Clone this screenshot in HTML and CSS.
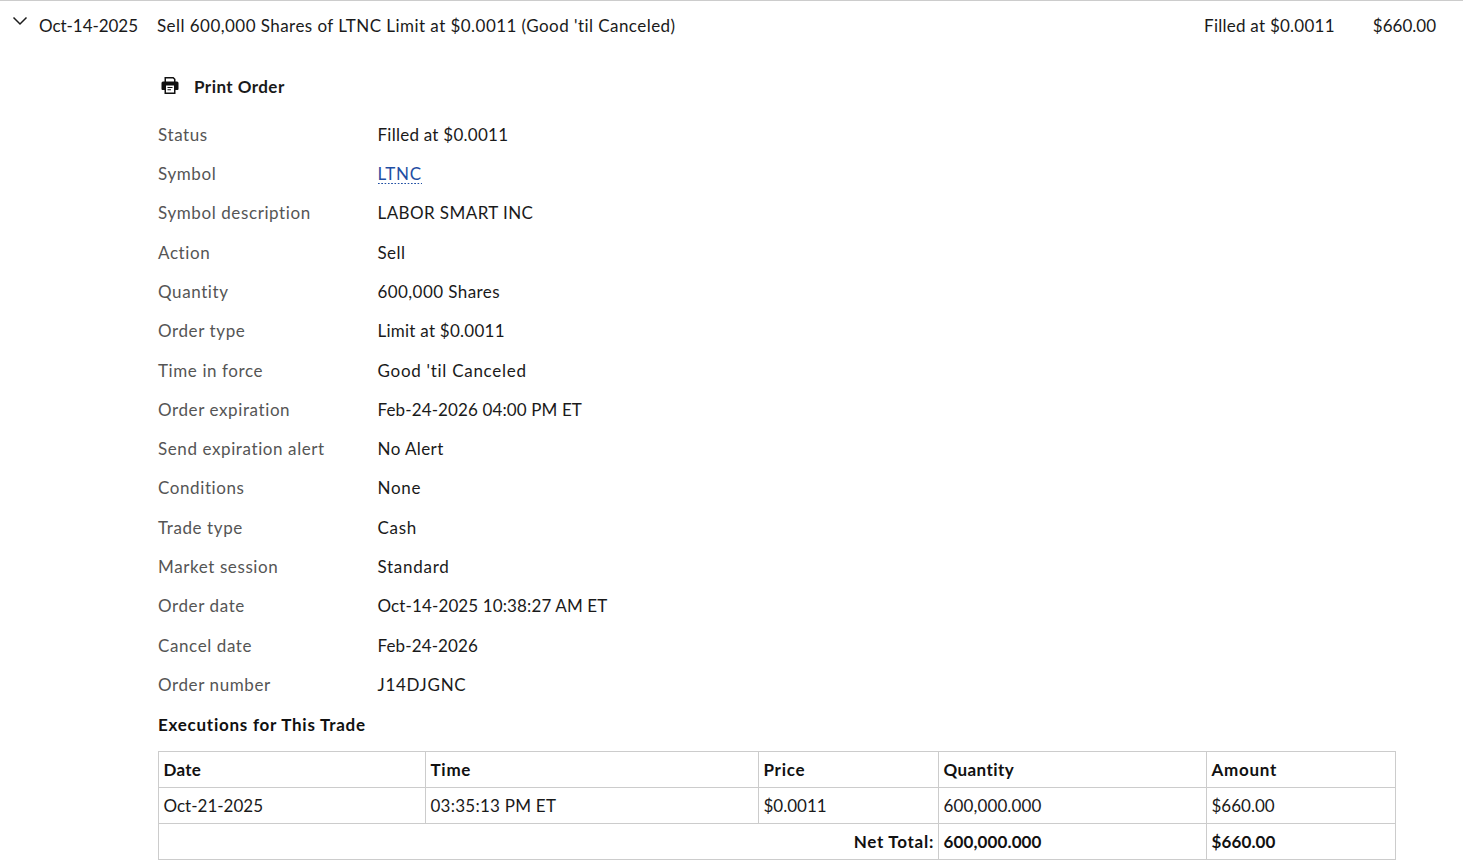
FILE: index.html
```html
<!DOCTYPE html>
<html lang="en">
<head>
<meta charset="utf-8">
<title>Order details</title>
<link rel="stylesheet" href="styles.css">
</head>
<body>
<div class="order">
  <div class="summary">
    <svg class="chevron" width="16" height="10" viewBox="0 0 16 10"><path d="M1.500 1.500 L8 8 L14.500 1.500" fill="none" stroke="#1c1c1c" stroke-width="1.500"/></svg>
    <span class="date">Oct-14-2025</span>
    <span class="desc">Sell 600,000 Shares of LTNC Limit at $0.0011 (Good 'til Canceled)</span>
    <span class="state sp-1">Filled at $0.0011</span>
    <span class="amount">$660.00</span>
  </div>
  <div class="detail">
    <div class="print">
      <svg class="print-icon" width="18" height="18" viewBox="0 0 18 18"><path fill="#111" fill-rule="evenodd" d="M3.500 0H12.500L14.500 2V4.500H16A1.500 1.500 0 0 1 17.500 6V12A1 1 0 0 1 16.500 13H14.500V17H3.500V13H1.500A1 1 0 0 1 .5 12V6A1.500 1.500 0 0 1 2 4.500H3.500ZM5 1.500V4.500H13V2.600L11.900 1.500ZM5 8.500V15.500H13V8.500Z"/><path fill="#111" d="M6.500 10H11.500V11H6.500ZM6.500 12.200H10V13.200H6.500Z"/></svg>
      <span>Print Order</span>
    </div>
    <dl class="fields">
      <dt>Status</dt><dd class="sp-1">Filled at $0.0011</dd>
      <dt>Symbol</dt><dd class="sp-3"><a class="symbol">LTNC</a></dd>
      <dt>Symbol description</dt><dd class="sp-2">LABOR SMART INC</dd>
      <dt>Action</dt><dd class="sp-2">Sell</dd>
      <dt>Quantity</dt><dd class="sp-2">600,000 Shares</dd>
      <dt>Order type</dt><dd class="sp-1">Limit at $0.0011</dd>
      <dt>Time in force</dt><dd class="sp-3">Good 'til Canceled</dd>
      <dt>Order expiration</dt><dd class="sp-0">Feb-24-2026 04:00 PM ET</dd>
      <dt>Send expiration alert</dt><dd class="sp-2">No Alert</dd>
      <dt>Conditions</dt><dd class="sp-3">None</dd>
      <dt>Trade type</dt><dd class="sp-3">Cash</dd>
      <dt>Market session</dt><dd class="sp-3">Standard</dd>
      <dt>Order date</dt><dd class="sp-0">Oct-14-2025 10:38:27 AM ET</dd>
      <dt>Cancel date</dt><dd class="sp-0">Feb-24-2026</dd>
      <dt>Order number</dt><dd class="sp-3">J14DJGNC</dd>
    </dl>
    <h3 class="exec-title">Executions for This Trade</h3>
    <table class="exec">
      <colgroup><col class="c1"><col class="c2"><col class="c3"><col class="c4"><col class="c5"></colgroup>
      <thead><tr><th class="sp-1">Date</th><th class="sp-3">Time</th><th class="sp-3">Price</th><th class="sp-2">Quantity</th><th class="sp-3">Amount</th></tr></thead>
      <tbody>
        <tr><td>Oct-21-2025</td><td class="sp-1">03:35:13 PM ET</td><td>$0.0011</td><td class="sp-0">600,000.000</td><td>$660.00</td></tr>
        <tr class="total"><td colspan="3" class="sp-3">Net Total:</td><td class="sp-0">600,000.000</td><td class="sp-0">$660.00</td></tr>
      </tbody>
    </table>
  </div>
</div>
</body>
</html>
```
FILE: styles.css
```css
* { box-sizing: border-box; }
html, body { margin: 0; padding: 0; background: #fff; }
body {
  font-family: Lato, "Open Sans", sans-serif;
  font-size: 17px;
  line-height: 20px;
  color: #1a1a1a;
  height: 866px;
  overflow: hidden;
}
.sp-0 { letter-spacing: 0.12px; }
.sp-1 { letter-spacing: 0.25px; }
.sp-2 { letter-spacing: 0.42px; }
.sp-3 { letter-spacing: 0.72px; }
.order { border-top: 1px solid #ccc; }
.summary {
  display: flex;
  align-items: center;
  height: 50px;
  padding: 0 27px 0 12px;
}
.chevron { margin: -11px 11px 0 0; flex: none; }
.date { width: 118px; flex: none; letter-spacing: -0.05px; }
.desc { flex: 1; letter-spacing: 0.45px; }
.state { margin-right: 38px; }
.detail { padding-left: 158px; }
.print {
  display: flex;
  align-items: center;
  font-weight: 700;
  height: 24px;
  margin-top: 24px;
  margin-left: 3px;
  letter-spacing: 0.45px;
}
.print-icon { margin: -3px 15px 0 0; flex: none; }
.fields {
  display: grid;
  grid-template-columns: 219.500px 1fr;
  grid-auto-rows: 39.286px;
  align-items: center;
  margin: 16.250px 0 0;
}
.fields dt { color: #555; letter-spacing: 0.6px; }
.fields dd { margin: 0; }
.symbol {
  color: #1f4ea3;
  background-image: linear-gradient(to right, #1f4ea3 1.500px, transparent 1.500px);
  background-size: 3.300px 1.500px;
  background-repeat: repeat-x;
  background-position: left bottom;
}
.exec-title {
  font-size: 17px;
  line-height: 20px;
  font-weight: 700;
  margin: 10.700px 0 0;
  color: #111;
  letter-spacing: 0.75px;
}
.exec {
  border-collapse: collapse;
  table-layout: fixed;
  width: 1237px;
  margin-top: 16px;
}
.c1 { width: 267px; }
.c2 { width: 333px; }
.c3 { width: 180px; }
.c4 { width: 268px; }
.c5 { width: 189px; }
.exec th, .exec td {
  border: 1px solid #ccc;
  height: 36px;
  padding: 1px 5px 0 4.500px;
  text-align: left;
  font-weight: 400;
}
.exec th { font-weight: 700; color: #111; }
.exec .total td { font-weight: 700; color: #111; }
.exec .total td:first-child { text-align: right; padding-right: 4px; }
```
